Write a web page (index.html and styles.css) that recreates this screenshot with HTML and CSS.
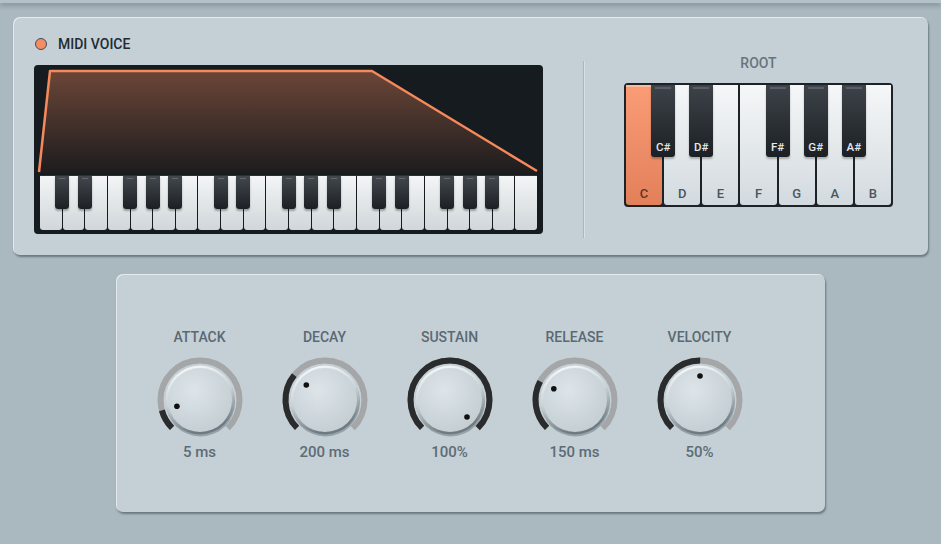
FILE: index.html
```html
<!DOCTYPE html>
<html lang="en">
<head>
    <meta charset="UTF-8">
    <meta name="viewport" content="width=device-width, initial-scale=1.0">
    <title>MIDI Voice</title>
    <link rel="stylesheet" href="styles.css">
</head>
<body>
    <div class="rack-top"></div>

    <!-- Voice panel: envelope preview + root note -->
    <section class="panel voice-panel">
        <div class="voice-main">
            <div class="voice-head">
                <span class="led"></span>
                <span class="voice-title">MIDI VOICE</span>
            </div>
            <div class="display">
                <svg class="env" width="509" height="108" viewBox="0 0 509 108">
                    <defs>
                        <linearGradient id="envFill" x1="0" y1="0" x2="0" y2="1">
                            <stop offset="0" stop-color="#6c4637"/>
                            <stop offset="1" stop-color="#1d1c1e"/>
                        </linearGradient>
                    </defs>
                    <path d="M5,108 L16,6 L338,6 L503,106 L503,108 Z" fill="url(#envFill)"/>
                    <polyline points="5,107 16,6 338,6 503,106" fill="none" stroke="#f6895c" stroke-width="2.5" stroke-linejoin="round"/>
                </svg>
                <div class="mini-keys">
                    <div class="wk"><span class="bk"></span></div>
                    <div class="wk"><span class="bk"></span></div>
                    <div class="wk"></div>
                    <div class="wk"><span class="bk"></span></div>
                    <div class="wk"><span class="bk"></span></div>
                    <div class="wk"><span class="bk"></span></div>
                    <div class="wk"></div>
                    <div class="wk"><span class="bk"></span></div>
                    <div class="wk"><span class="bk"></span></div>
                    <div class="wk"></div>
                    <div class="wk"><span class="bk"></span></div>
                    <div class="wk"><span class="bk"></span></div>
                    <div class="wk"><span class="bk"></span></div>
                    <div class="wk"></div>
                    <div class="wk"><span class="bk"></span></div>
                    <div class="wk"><span class="bk"></span></div>
                    <div class="wk"></div>
                    <div class="wk"><span class="bk"></span></div>
                    <div class="wk"><span class="bk"></span></div>
                    <div class="wk"><span class="bk"></span></div>
                    <div class="wk"></div>
                    <div class="wk"></div>
                </div>
            </div>
        </div>

        <div class="divider"></div>

        <div class="root-sec">
            <div class="root-title">ROOT</div>
            <div class="root-keys">
                <div class="rk active"><span class="rbk">C#</span>C</div>
                <div class="rk"><span class="rbk">D#</span>D</div>
                <div class="rk">E</div>
                <div class="rk"><span class="rbk">F#</span>F</div>
                <div class="rk"><span class="rbk">G#</span>G</div>
                <div class="rk"><span class="rbk">A#</span>A</div>
                <div class="rk">B</div>
            </div>
        </div>
    </section>

    <!-- Envelope knobs -->
    <section class="panel env-panel">
        <div class="knob-row">
            <div class="knob-col">
                <div class="knob-label">ATTACK</div>
                <svg class="knob" width="90" height="90" viewBox="0 0 90 90">
                    <defs>
                        <linearGradient id="rim" x1="0" y1="0" x2="0.3" y2="1">
                            <stop offset="0" stop-color="#ffffff"/>
                            <stop offset="0.55" stop-color="#c9d2d7"/>
                            <stop offset="1" stop-color="#6f7a80"/>
                        </linearGradient>
                        <radialGradient id="cap" cx="0.4" cy="0.35" r="0.7">
                            <stop offset="0" stop-color="#dde5e9"/>
                            <stop offset="1" stop-color="#c3cdd2"/>
                        </radialGradient>
                    </defs>
                    <circle class="track" cx="45" cy="45" r="39.5" stroke-dasharray="186.14 300" transform="rotate(135 45 45)"/>
                    <circle class="value" cx="45" cy="45" r="39.5" stroke-dasharray="20.5 300" transform="rotate(135 45 45)"/>
                    <circle cx="45.5" cy="47" r="34.5" fill="rgba(60,75,85,0.35)"/>
                    <circle cx="45" cy="45" r="34.5" fill="url(#rim)"/>
                    <circle cx="45" cy="45" r="32" fill="url(#cap)"/>
                    <circle cx="21.9" cy="51.3" r="2.8" fill="#111"/>
                </svg>
                <div class="knob-value">5 ms</div>
            </div>
            <div class="knob-col">
                <div class="knob-label">DECAY</div>
                <svg class="knob" width="90" height="90" viewBox="0 0 90 90">
                    <circle class="track" cx="45" cy="45" r="39.5" stroke-dasharray="186.14 300" transform="rotate(135 45 45)"/>
                    <circle class="value" cx="45" cy="45" r="39.5" stroke-dasharray="57.7 300" transform="rotate(135 45 45)"/>
                    <circle cx="45.5" cy="47" r="34.5" fill="rgba(60,75,85,0.35)"/>
                    <circle cx="45" cy="45" r="34.5" fill="url(#rim)"/>
                    <circle cx="45" cy="45" r="32" fill="url(#cap)"/>
                    <circle cx="26.3" cy="30" r="2.8" fill="#111"/>
                </svg>
                <div class="knob-value">200 ms</div>
            </div>
            <div class="knob-col">
                <div class="knob-label">SUSTAIN</div>
                <svg class="knob" width="90" height="90" viewBox="0 0 90 90">
                    <circle class="track" cx="45" cy="45" r="39.5" stroke-dasharray="186.14 300" transform="rotate(135 45 45)"/>
                    <circle class="value" cx="45" cy="45" r="39.5" stroke-dasharray="186.14 300" transform="rotate(135 45 45)"/>
                    <circle cx="45.5" cy="47" r="34.5" fill="rgba(60,75,85,0.35)"/>
                    <circle cx="45" cy="45" r="34.5" fill="url(#rim)"/>
                    <circle cx="45" cy="45" r="32" fill="url(#cap)"/>
                    <circle cx="62" cy="62" r="2.8" fill="#111"/>
                </svg>
                <div class="knob-value">100%</div>
            </div>
            <div class="knob-col">
                <div class="knob-label">RELEASE</div>
                <svg class="knob" width="90" height="90" viewBox="0 0 90 90">
                    <circle class="track" cx="45" cy="45" r="39.5" stroke-dasharray="186.14 300" transform="rotate(135 45 45)"/>
                    <circle class="value" cx="45" cy="45" r="39.5" stroke-dasharray="50.3 300" transform="rotate(135 45 45)"/>
                    <circle cx="45.5" cy="47" r="34.5" fill="rgba(60,75,85,0.35)"/>
                    <circle cx="45" cy="45" r="34.5" fill="url(#rim)"/>
                    <circle cx="45" cy="45" r="32" fill="url(#cap)"/>
                    <circle cx="23.8" cy="33.8" r="2.8" fill="#111"/>
                </svg>
                <div class="knob-value">150 ms</div>
            </div>
            <div class="knob-col">
                <div class="knob-label">VELOCITY</div>
                <svg class="knob" width="90" height="90" viewBox="0 0 90 90">
                    <circle class="track" cx="45" cy="45" r="39.5" stroke-dasharray="186.14 300" transform="rotate(135 45 45)"/>
                    <circle class="value" cx="45" cy="45" r="39.5" stroke-dasharray="93.07 300" transform="rotate(135 45 45)"/>
                    <circle cx="45.5" cy="47" r="34.5" fill="rgba(60,75,85,0.35)"/>
                    <circle cx="45" cy="45" r="34.5" fill="url(#rim)"/>
                    <circle cx="45" cy="45" r="32" fill="url(#cap)"/>
                    <circle cx="45" cy="21" r="2.8" fill="#111"/>
                </svg>
                <div class="knob-value">50%</div>
            </div>
        </div>
    </section>
</body>
</html>
```

FILE: styles.css
```css
body {
    margin: 0;
    background: #aab8bf;
    font-family: Roboto, "Liberation Sans", sans-serif;
    height: 544px;
    overflow: hidden;
}
.rack-top {
    height: 3px;
    background: #b4c1c8;
    box-shadow: 0 2px 5px rgba(40, 55, 65, 0.45);
}
.panel {
    box-sizing: border-box;
    background: #c4d0d6;
    border-radius: 7px;
    box-shadow: 1px 2px 2px rgba(45, 60, 70, 0.5), inset 1px 1px 0 rgba(255, 255, 255, 0.55);
}
.voice-panel {
    display: flex;
    align-items: flex-start;
    margin: 14px 13px 0;
    height: 238px;
    padding: 21px 0 0 21px;
}
.voice-main {
    width: 509px;
}
.voice-head {
    display: flex;
    align-items: center;
    gap: 11px;
    height: 12px;
    padding-left: 1px;
}
.led {
    width: 12px;
    height: 12px;
    box-sizing: border-box;
    border-radius: 50%;
    background: #f58c62;
    border: 1.5px solid #3f4d56;
}
.voice-title {
    font-size: 14px;
    font-weight: 500;
    color: #232b31;
}
.display {
    margin-top: 15px;
    height: 169px;
    box-sizing: border-box;
    background: #151b1f;
    border-radius: 4px;
    padding: 0 6px 4px;
    display: flex;
    flex-direction: column;
}
.env {
    display: block;
    margin: 0 -6px;
}
.mini-keys {
    margin-top: 2px;
    flex: 1;
    display: flex;
    gap: 1px;
    border-top: 1px solid #2a3034;
}
.wk {
    flex: 1;
    position: relative;
    background: linear-gradient(#f3f5f6, #d0d6db);
    border-radius: 0 0 3px 3px;
}
.bk {
    position: absolute;
    top: 0;
    right: -7.5px;
    width: 14px;
    height: 33px;
    z-index: 1;
    background: linear-gradient(#43484e, #1c2024);
    border-radius: 0 0 3px 3px;
    box-shadow: 0 2px 2px rgba(0, 0, 0, 0.3);
}
.bk::before {
    content: "";
    position: absolute;
    top: 2px;
    left: 4px;
    right: 4px;
    height: 1px;
    background: #62686e;
}
.divider {
    margin: 23px 0 0 40px;
    width: 1px;
    height: 177px;
    background: #aab7be;
    box-shadow: 1px 0 0 rgba(255, 255, 255, 0.35);
}
.root-sec {
    margin-left: 40px;
    width: 269px;
    display: flex;
    flex-direction: column;
    align-items: center;
}
.root-title {
    margin-top: 18px;
    font-size: 14px;
    font-weight: 500;
    line-height: 14px;
    color: #67747d;
}
.root-keys {
    margin-top: 13px;
    width: 269px;
    height: 124px;
    box-sizing: border-box;
    background: #1c2226;
    border: 2px solid #1c2226;
    border-radius: 4px;
    display: flex;
    gap: 2px;
}
.rk {
    flex: 1;
    position: relative;
    display: flex;
    align-items: flex-end;
    justify-content: center;
    padding-bottom: 4px;
    background: linear-gradient(#f5f7f8, #d3dadf);
    border-radius: 0 0 3px 3px;
    font-size: 13px;
    font-weight: 500;
    color: #4a5660;
}
.rk.active {
    background: linear-gradient(#fa9c76, #e2805a);
    color: #5a3526;
    box-shadow: inset 0 2px 0 rgba(255, 205, 180, 0.6);
}
.rbk {
    position: absolute;
    top: 0;
    right: -13px;
    width: 24px;
    height: 72px;
    z-index: 1;
    box-sizing: border-box;
    padding-bottom: 3px;
    display: flex;
    align-items: flex-end;
    justify-content: center;
    background: linear-gradient(#3d4349, #1c2024);
    border-radius: 0 0 3px 3px;
    font-size: 11.5px;
    font-weight: 500;
    color: #e6eaed;
    box-shadow: 0 2px 2px rgba(0, 0, 0, 0.25);
}
.rbk::before {
    content: "";
    position: absolute;
    top: 2px;
    left: 4px;
    right: 4px;
    height: 2px;
    background: #575e64;
}
.env-panel {
    margin: 19px 0 0 116px;
    width: 709px;
    height: 238px;
    padding: 56px 0 0 21px;
}
.knob-row {
    display: flex;
}
.knob-col {
    width: 125px;
    display: flex;
    flex-direction: column;
    align-items: center;
}
.knob-label {
    font-size: 14px;
    font-weight: 500;
    line-height: 15px;
    color: #5a6973;
}
.knob {
    display: block;
    margin-top: 10px;
}
.knob .track {
    fill: none;
    stroke: #a4a6a7;
    stroke-width: 6;
}
.knob .value {
    fill: none;
    stroke: #2a2b2c;
    stroke-width: 6;
}
.knob-value {
    margin-top: -1px;
    font-size: 15px;
    font-weight: 500;
    line-height: 16px;
    color: #5d6c75;
}
```
